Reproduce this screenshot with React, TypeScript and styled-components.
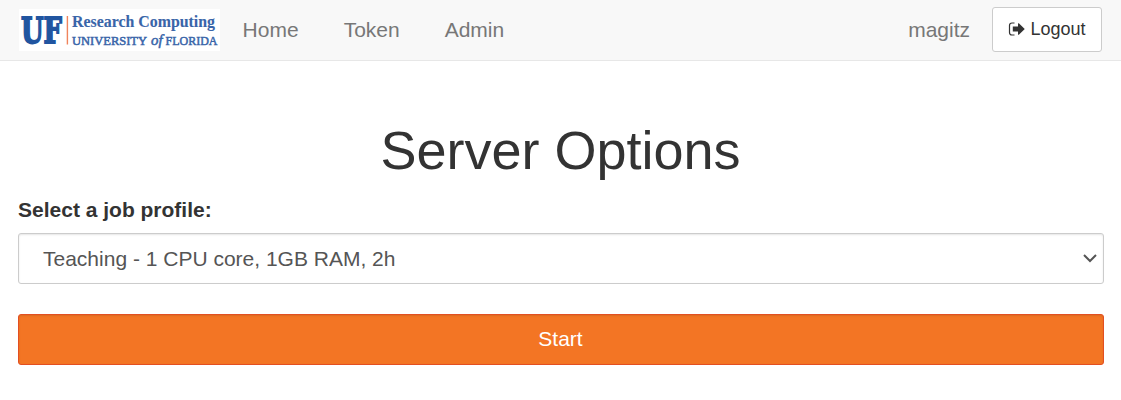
import React from "react";
import styled, { createGlobalStyle } from "styled-components";

const GlobalStyle = createGlobalStyle`
  * { box-sizing: border-box; }
  body {
    margin: 0;
    background: #fff;
    color: #333;
    font: 21px/30px "Liberation Sans", Arial, sans-serif;
  }
`;

const Navbar = styled.nav`
  display: flex;
  align-items: center;
  height: 61px;
  padding: 0 19px;
  background: #f8f8f8;
  border-bottom: 1px solid #e7e7e7;
`;

const Logo = styled.svg`
  display: block;
  flex: none;
  width: 201px;
  height: 42px;
  background: #fff;
`;

const NavLinks = styled.div`
  display: flex;
  flex: 1;
  gap: 45px;
  margin-left: 22.6px;
`;

const NavLink = styled.a`
  color: #777;
  text-decoration: none;
`;

const LogoutButton = styled.button`
  display: flex;
  align-items: center;
  justify-content: center;
  gap: 4px;
  width: 110px;
  height: 45px;
  margin: 0 0 1px 22px;
  padding: 0 0 1px;
  border: 1px solid #ccc;
  border-radius: 3px;
  background: #fff;
  color: #333;
  font: 18px/27px "Liberation Sans", Arial, sans-serif;
`;

const Main = styled.main`
  display: flex;
  flex-direction: column;
  padding: 60px 17px 0 18px;
`;

const Title = styled.h1`
  margin: 0 1px 15px 0;
  font-size: 54px;
  line-height: 59px;
  font-weight: 400;
  text-align: center;
`;

const Label = styled.label`
  margin-bottom: 8px;
  font-weight: 700;
`;

const SelectBox = styled.div`
  display: flex;
  align-items: center;
  justify-content: space-between;
  height: 51px;
  padding: 0 6px 0 24px;
  border: 1px solid #ccc;
  border-radius: 3px;
  color: #555;
  box-shadow: inset 0 1px 2px rgba(0, 0, 0, 0.1);
`;

const StartButton = styled.button`
  height: 51px;
  margin-top: 30px;
  padding: 0 1px 1px 0;
  border: 1px solid #e34f21;
  border-radius: 3px;
  background: #f37524;
  color: #fff;
  font: inherit;
  box-shadow: inset 0 1px 2px rgba(0, 0, 0, 0.1);
`;

const UfLogo = () => (
  <Logo viewBox="0 0 201 42" role="img" aria-label="UF Research Computing">
    <text x="2" y="33.6" fontFamily="DejaVu Serif" fontWeight="700" fontSize="35.500" fill="#2155a0" stroke="#2155a0" strokeWidth="1.8" textLength="41" lengthAdjust="spacingAndGlyphs">UF</text>
    <rect x="47.7" y="7" width="1.4" height="28.500" fill="#f0845c" />
    <g fontFamily="Liberation Serif" fill="#3965a9" stroke="#3965a9">
      <text x="53" y="18.3" fontSize="16.500" fontWeight="700" strokeWidth="0.1" textLength="143" lengthAdjust="spacingAndGlyphs">Research Computing</text>
      <g fontSize="13.500" strokeWidth="0.55">
        <text x="53" y="35.800" textLength="75" lengthAdjust="spacingAndGlyphs">UNIVERSITY</text>
        <text x="132" y="35.800" fontSize="15" fontStyle="italic" textLength="11.500" lengthAdjust="spacingAndGlyphs">of</text>
        <text x="146.500" y="35.800" textLength="52" lengthAdjust="spacingAndGlyphs">FLORIDA</text>
      </g>
    </g>
  </Logo>
);

const SignOutIcon = () => (
  <svg width="18" height="18" viewBox="0 0 18 18">
    <path d="M6.500 3H4Q1.500 3 1.500 5.500V12.500Q1.500 15 4 15H6.500" fill="none" stroke="#333" strokeWidth="1.200" />
    <path d="M4.800 6.600H10V3.500Q10.500 2.900 11.100 3.400L16.500 8.700Q16.800 9 16.500 9.300L11.100 14.600Q10.500 15.100 10 14.500V11.500H4.800Z" fill="#333" />
  </svg>
);

const Chevron = () => (
  <svg width="14" height="10" viewBox="0 0 14 10" fill="none" stroke="#555" strokeWidth="2">
    <path d="M1 1L7 7L13 1" />
  </svg>
);

export default function App() {
  return (
    <>
      <GlobalStyle />
      <Navbar>
        <UfLogo />
        <NavLinks>
          <NavLink>Home</NavLink>
          <NavLink>Token</NavLink>
          <NavLink>Admin</NavLink>
        </NavLinks>
        <NavLink>magitz</NavLink>
        <LogoutButton>
          <SignOutIcon />
          <span>Logout</span>
        </LogoutButton>
      </Navbar>
      <Main>
        <Title>Server Options</Title>
        <Label>Select a job profile:</Label>
        <SelectBox>
          <span>Teaching - 1 CPU core, 1GB RAM, 2h</span>
          <Chevron />
        </SelectBox>
        <StartButton>Start</StartButton>
      </Main>
    </>
  );
}
